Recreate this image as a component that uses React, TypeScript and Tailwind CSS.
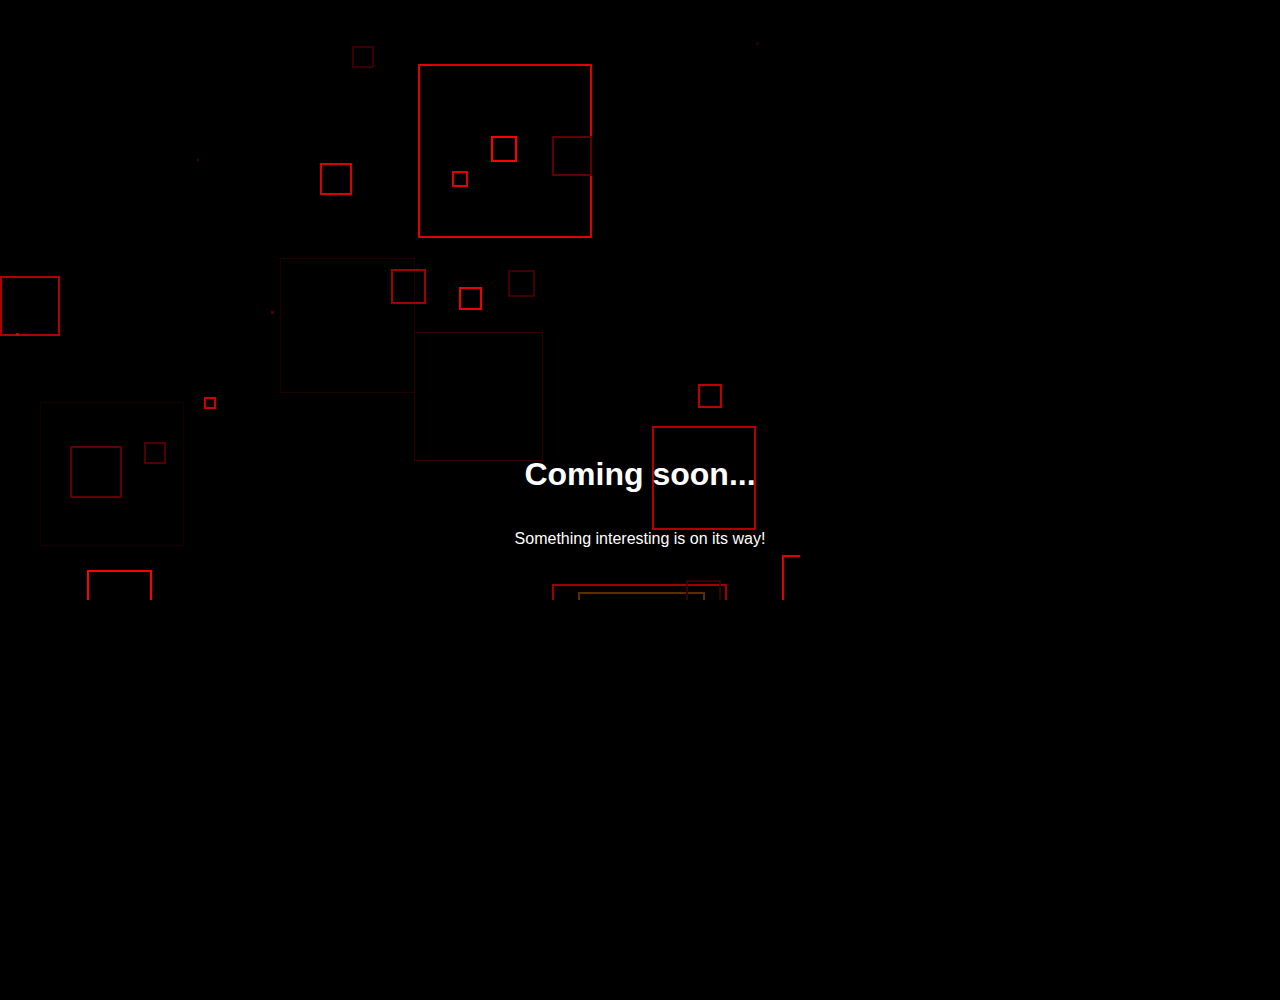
type Sq = { x: number; y: number; s: number; c: string; w: number };

// outer bounds of each square, stroke colour and width
const squares: Sq[] = [
  { x: 418, y: 64, s: 174, c: "#e00000", w: 2 },
  { x: 491, y: 136, s: 26, c: "#ff0000", w: 2 },
  { x: 452, y: 171, s: 16, c: "#e00000", w: 2 },
  { x: 552, y: 136, s: 40, c: "#600000", w: 2 },
  { x: 352, y: 46, s: 22, c: "#3a0000", w: 2 },
  { x: 320, y: 163, s: 32, c: "#d80000", w: 2 },
  { x: 0, y: 276, s: 60, c: "#b00000", w: 2 },
  { x: 280, y: 258, s: 135, c: "#220000", w: 1 },
  { x: 204, y: 397, s: 12, c: "#d00000", w: 2 },
  { x: 40, y: 402, s: 144, c: "#160000", w: 1 },
  { x: 391, y: 269, s: 35, c: "#a00000", w: 2 },
  { x: 459, y: 287, s: 23, c: "#f00000", w: 2 },
  { x: 508, y: 270, s: 27, c: "#400000", w: 2 },
  { x: 414, y: 332, s: 129, c: "#300000", w: 1 },
  { x: 70, y: 446, s: 52, c: "#600000", w: 2 },
  { x: 144, y: 442, s: 22, c: "#500000", w: 2 },
  { x: 87, y: 570, s: 65, c: "#ff0000", w: 2 },
  { x: 698, y: 384, s: 24, c: "#c00000", w: 2 },
  { x: 652, y: 426, s: 104, c: "#b00000", w: 2 },
  { x: 552, y: 584, s: 175, c: "#a00000", w: 2 },
  { x: 578, y: 592, s: 127, c: "#5a3000", w: 2 },
  { x: 686, y: 580, s: 35, c: "#380000", w: 2 },
  { x: 782, y: 555, s: 60, c: "#e00000", w: 2 },
];

const dots = [
  { x: 197, y: 159, s: 2, c: "#500000" },
  { x: 16, y: 333, s: 3, c: "#d00000" },
  { x: 271, y: 311, s: 3, c: "#500000" },
  { x: 756, y: 42, s: 3, c: "#200000" },
];

export default function App() {
  return (
    <div className="relative h-screen w-full overflow-hidden bg-black">
      <svg width="800" height="600" viewBox="0 0 800 600" className="block">
        {squares.map((q, i) => (
          <rect
            key={i}
            x={q.x + q.w / 2}
            y={q.y + q.w / 2}
            width={q.s - q.w}
            height={q.s - q.w}
            fill="none"
            stroke={q.c}
            strokeWidth={q.w}
            shapeRendering="crispEdges"
          />
        ))}
        {dots.map((d, i) => (
          <rect key={i} x={d.x} y={d.y} width={d.s} height={d.s} fill={d.c} />
        ))}
      </svg>

      <div className="absolute inset-0 flex flex-col items-center justify-center text-center text-white font-['Liberation_Sans',Arial,sans-serif]">
        <h1 className="mt-[20px] mb-[21px] text-[32px] font-bold leading-[37px]">Coming soon...</h1>
        <p className="mt-4 mb-4 text-base leading-[18px]">Something interesting is on its way!</p>
      </div>
    </div>
  );
}
